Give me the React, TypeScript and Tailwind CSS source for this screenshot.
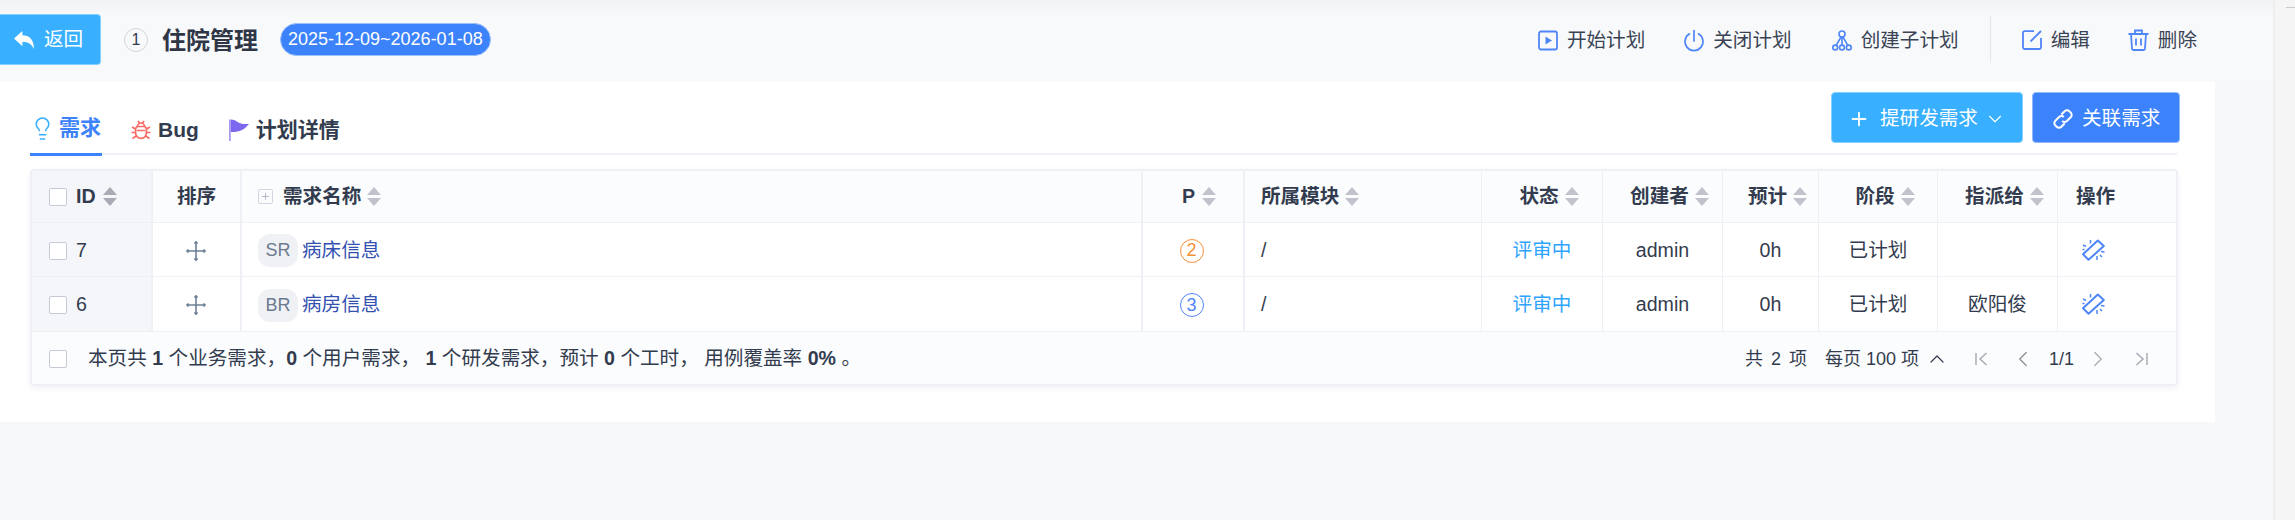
import { Lightbulb, Plus, ChevronDown, ChevronUp, ChevronLeft, ChevronRight } from "lucide-react"

const gridCols =
  "grid grid-cols-[121px_89px_901px_102px_237px_121px_120px_96px_119px_120px_118px]"

const rows = [
  { id: 7, tag: "SR", name: "病床信息", pri: 2, owner: "" },
  { id: 6, tag: "BR", name: "病房信息", pri: 3, owner: "欧阳俊" },
]

function SortIcon({ dark = false }: { dark?: boolean }) {
  return (
    <svg width="14" height="19" viewBox="0 0 14 19" className={`shrink-0 ${dark ? "text-[#a9abb4]" : "text-[#c1c3cc]"}`}>
      <path d="M7 0 14 8H0Z" fill="currentColor" />
      <path d="M0 11H14L7 19Z" fill="currentColor" />
    </svg>
  )
}

function Checkbox() {
  return <span className="block w-[18px] h-[18px] shrink-0 border border-[#c6cad6] rounded-[2px] bg-white" />
}

function PlayIcon() {
  return (
    <svg width="20" height="21" viewBox="0 0 20 21" fill="none" stroke="#4f86f7" strokeWidth="1.8">
      <rect x="1" y="1.5" width="18" height="18" rx="2" />
      <path d="M7.500 6.500 14 10.500 7.500 14.500Z" fill="#4f86f7" stroke="none" />
    </svg>
  )
}

function PowerIcon() {
  return (
    <svg width="20" height="23" viewBox="0 0 20 23" fill="none" stroke="#4f86f7" strokeWidth="1.7" strokeLinecap="round">
      <path d="M10 1.500V12" />
      <path d="M5.500 4.800A9 9 0 1 0 14.500 4.800" />
    </svg>
  )
}

function TreeIcon() {
  return (
    <svg width="20" height="21" viewBox="0 0 20 21" fill="none" stroke="#4f86f7" strokeWidth="1.6">
      <circle cx="10" cy="4" r="3" />
      <circle cx="3.200" cy="17.500" r="2.400" />
      <circle cx="10" cy="17.500" r="2.400" />
      <circle cx="16.800" cy="17.500" r="2.400" />
      <path d="M10 7v8M9 7 4.200 15.400M11 7l4.800 8.400" />
    </svg>
  )
}

function EditIcon() {
  return (
    <svg width="20" height="20" viewBox="0 0 20 20" fill="none" stroke="#4f86f7" strokeWidth="1.8">
      <path d="M12 1.200H2.500A1.500 1.500 0 0 0 1 2.700v14.800A1.500 1.500 0 0 0 2.500 19h15a1.500 1.500 0 0 0 1.500-1.500V8" />
      <path d="M8.500 11.500 19 1" />
    </svg>
  )
}

function TrashIcon() {
  return (
    <svg width="21" height="22" viewBox="0 0 21 22" fill="none" stroke="#4f86f7" strokeWidth="1.8">
      <path d="M0.500 5H20.500M7 5V1.500H14V5" />
      <path d="M3 5 4 19.500A1.500 1.500 0 0 0 5.500 21H15.500A1.500 1.500 0 0 0 17 19.500L18 5" />
      <path d="M8 9.500V16.500M13 9.500V16.500" />
    </svg>
  )
}

function BugIcon() {
  return (
    <svg width="20" height="20" viewBox="0 0 20 20" fill="none" stroke="#fb6a63" strokeWidth="1.7">
      <path d="M6 6.500h8l1.400 2V13a5.400 5.400 0 0 1-10.800 0V8.500Z" />
      <path d="M6.500 6.500a3.500 3.500 0 0 1 7 0M7 1l1.500 2.200M13 1l-1.500 2.200M6 10.500h8M1 7l3.600 2M19 7l-3.600 2M.5 12.500h4M19.500 12.500h-4M1.500 18.500l3.800-2.500M18.500 18.500l-3.800-2.500" />
    </svg>
  )
}

function FlagIcon() {
  return (
    <svg width="20" height="22" viewBox="0 0 20 22">
      <path d="M0 0.500 1.800 0.500V22H0Z" fill="#a99af0" />
      <path d="M1.800 0.500C7 0.500 8 3.500 12 4.500 15 5.200 17 5 20 5 18 7 16 9.500 14 10.500 10.500 12.500 7 13 1.800 13Z" fill="#7b68ee" />
    </svg>
  )
}

function MoveIcon() {
  return (
    <svg width="20" height="20" viewBox="0 0 20 20" fill="none" stroke="#6d7f96" strokeWidth="1.600">
      <path d="M10 1v18M1 10h18" />
      <path d="M8.500 2.500 10 .8l1.500 1.700M8.500 17.500 10 19.200l1.500-1.700M2.500 8.500.8 10l1.700 1.500M17.500 8.500 19.200 10l-1.700 1.500" fill="#6d7f96" />
    </svg>
  )
}

function LinkIcon() {
  return (
    <svg width="20" height="20" viewBox="0 0 18 18" fill="none" stroke="#ffffff" strokeWidth="1.800">
      <path d="M7.500 5 10.500 2a2.900 2.900 0 0 1 4.200 0l1.200 1.200a2.900 2.900 0 0 1 0 4.200l-3.400 3.400a2.900 2.900 0 0 1-4.200 0" />
      <path d="M10.500 13 7.500 16a2.900 2.900 0 0 1-4.200 0l-1.200-1.200a2.900 2.900 0 0 1 0-4.200l3.400-3.400a2.900 2.900 0 0 1 4.200 0" />
    </svg>
  )
}

function UnlinkIcon() {
  return (
    <svg width="23" height="22" viewBox="0 0 23 22" fill="none" stroke="#4f86f7" strokeWidth="2" strokeLinejoin="round">
      <path d="M15.800 1.500 21.800 7 6.500 20.800 1 15.300Z" />
      <path d="M8.500 1V4.500M1 6 4 7.500M.5 10.500H2.500M15 17V21M18 16l2 2M19 12.500 22.500 13" strokeWidth="1.500" />
    </svg>
  )
}

function PageEdge({ flip = false }: { flip?: boolean }) {
  return (
    <svg width="13" height="14" viewBox="0 0 13 14" fill="none" stroke="#a8acb5" strokeWidth="1.500" className={flip ? "-scale-x-100" : ""}>
      <path d="M1 1v12M11.500 1 5 7l6.500 6" />
    </svg>
  )
}

function ToolItem({ icon, label, className = "" }: { icon: React.ReactNode; label: string; className?: string }) {
  return (
    <div className={`flex items-center gap-[9px] pt-[2px] ${className}`}>
      {icon}
      <span>{label}</span>
    </div>
  )
}

function HeadCell({ label }: { label: string }) {
  return (
    <div className="flex items-center justify-center gap-[6px] pl-[14px] border-r border-[#eef0f5]">
      <span>{label}</span>
      <SortIcon />
    </div>
  )
}

export default function App() {
  return (
    <div className="flex w-full h-[520px] overflow-hidden bg-[#f7f8fa] text-[19.6px] text-[#333c4e] font-['Liberation_Sans','Noto_Sans_CJK_SC',sans-serif]">
      <div className="flex-1 min-w-0">
        {/* top bar */}
        <div className="flex items-start h-[82px] bg-gradient-to-b from-[#f1f2f4] to-[#f8f9fb] to-[16px]">
          <button className="flex items-center gap-[10px] w-[101px] h-[51px] mt-[14px] pl-[14px] bg-[#38b0ff] border border-l-0 border-[#86d0ff] rounded-r-[4px] text-white">
            <svg width="20" height="18" viewBox="0 0 19 17" fill="#fff">
              <path d="M0 7 8 0V4C14.500 4 19 8 19 17 16.500 12 13.500 10.300 8 10.300V14.500Z" />
            </svg>
            返回
          </button>
          <span className="flex items-center justify-center w-[24px] h-[24px] ml-[23px] mt-[28px] rounded-full border border-[#d3d6e2] text-[16px] text-[#333c4e]">
            1
          </span>
          <h1 className="ml-[14px] mt-[25px] text-[24px] leading-[32px] font-bold text-[#2f3747]">住院管理</h1>
          <span className="flex items-center h-[33px] ml-[22px] mt-[23px] px-[7px] rounded-full bg-[#3b82fb] border border-[#9dc0fb] text-[18px] text-white">
            2025-12-09~2026-01-08
          </span>
          <div className="flex items-center ml-auto mt-[16px] mr-[76px] h-[47px] text-[#3a4354]">
            <ToolItem icon={<PlayIcon />} label="开始计划" />
            <ToolItem icon={<PowerIcon />} label="关闭计划" className="ml-[39px]" />
            <ToolItem icon={<TreeIcon />} label="创建子计划" className="ml-[40px]" />
            <div className="w-px h-full bg-[#e4e6ea] mx-[31px]" />
            <ToolItem icon={<EditIcon />} label="编辑" />
            <ToolItem icon={<TrashIcon />} label="删除" className="ml-[38px]" />
          </div>
        </div>

        {/* panel */}
        <div className="w-[2215px] h-[340px] bg-white pt-[10px] pl-[30px] pr-[38px]">
          <div className="flex justify-between h-[63px] border-b-2 border-[#eef0f5]">
            <div className="flex items-end h-[64px] font-bold text-[21px] whitespace-nowrap">
              <div className="flex items-center gap-[4px] h-[46px] w-[72px] shrink-0 pb-[7px] border-b-[3px] border-[#3b82fb] text-[#3b82fb]">
                <Lightbulb size={25} color="#38b0ff" strokeWidth={1.500} className="shrink-0" />
                需求
              </div>
              <div className="flex items-center gap-[7px] h-[46px] ml-[29px] pb-[7px]">
                <BugIcon />
                Bug
              </div>
              <div className="flex items-center gap-[7px] h-[46px] ml-[30px] pb-[7px]">
                <FlagIcon />
                计划详情
              </div>
            </div>
            <div className="flex gap-[9px] h-[51px] mr-[-3px] text-white">
              <button className="flex items-center w-[192px] h-full pt-[2px] pl-[16px] bg-[#38b0ff] border border-[#86d0ff] rounded-[4px]">
                <Plus size={22} strokeWidth={2} className="shrink-0" />
                <span className="ml-[10px] whitespace-nowrap">提研发需求</span>
                <ChevronDown size={22} strokeWidth={1.200} className="ml-[6px] shrink-0" />
              </button>
              <button className="flex items-center gap-[9px] w-[148px] h-full pt-[2px] pl-[20px] bg-[#3b82fb] border border-[#92b8fb] rounded-[4px] whitespace-nowrap">
                <LinkIcon />
                关联需求
              </button>
            </div>
          </div>

          {/* table */}
          <div className="mt-[14px] w-[2148px] border-2 border-[#eef0f5] rounded-[4px] shadow-[0_2px_6px_rgba(0,0,0,0.06)] overflow-hidden">
            <div className={`${gridCols} h-[52px] bg-[#fbfcfe] font-bold border-b border-[#eef0f5]`}>
              <div className="flex items-center pl-[17px] bg-[#f5f6f9] border-r-2 border-[#eef0f5]">
                <Checkbox />
                <span className="ml-[9px]">ID</span>
                <span className="ml-[7px]">
                  <SortIcon dark />
                </span>
              </div>
              <div className="flex items-center justify-center border-r-2 border-[#eef0f5]">排序</div>
              <div className="flex items-center pl-[16px] border-r-2 border-[#eef0f5]">
                <span className="flex items-center justify-center w-[15px] h-[15px] border border-[#d3d6e2] rounded-[2px] text-[#9aa0ae] font-normal">
                  <Plus size={11} strokeWidth={1.500} />
                </span>
                <span className="ml-[10px]">需求名称</span>
                <span className="ml-[6px]">
                  <SortIcon />
                </span>
              </div>
              <div className="flex items-center justify-center gap-[7px] pl-[12px] border-r-2 border-[#eef0f5]">
                <span>P</span>
                <SortIcon />
              </div>
              <div className="flex items-center gap-[6px] pl-[16px] border-r border-[#eef0f5]">
                <span>所属模块</span>
                <SortIcon />
              </div>
              <HeadCell label="状态" />
              <HeadCell label="创建者" />
              <HeadCell label="预计" />
              <HeadCell label="阶段" />
              <HeadCell label="指派给" />
              <div className="flex items-center pl-[18px]">操作</div>
            </div>

            {rows.map((row, i) => (
              <div key={row.id} className={`${gridCols} bg-white border-b border-[#eef0f5] ${i === 0 ? "h-[54px]" : "h-[55px]"}`}>
                <div className="flex items-center pt-[2px] pl-[17px] bg-[#f5f6f9] border-r-2 border-[#eef0f5]">
                  <Checkbox />
                  <span className="ml-[9px]">{row.id}</span>
                </div>
                <div className="flex items-center justify-center pt-[2px] pr-[2px] border-r-2 border-[#eef0f5]">
                  <MoveIcon />
                </div>
                <div className="flex items-center pt-[2px] pl-[16px] border-r-2 border-[#eef0f5]">
                  <span className="flex items-center justify-center w-[40px] h-[33px] rounded-[12px] bg-[#f0f1f4] text-[18px] text-[#6b7a90]">
                    {row.tag}
                  </span>
                  <span className="ml-[4px] text-[#3451b2]">{row.name}</span>
                </div>
                <div className="flex items-center justify-center pt-[2px] pr-[3px] border-r-2 border-[#eef0f5]">
                  <span
                    className={`flex items-center justify-center w-[24px] h-[24px] rounded-full border text-[18px] ${
                      row.pri === 2 ? "border-[#f59034] text-[#f59034]" : "border-[#4f83f7] text-[#4f83f7]"
                    }`}
                  >
                    {row.pri}
                  </span>
                </div>
                <div className="flex items-center pt-[2px] pl-[16px] border-r border-[#eef0f5]">/</div>
                <div className="flex items-center justify-center pt-[2px] text-[#2fa4ff] border-r border-[#eef0f5]">评审中</div>
                <div className="flex items-center justify-center pt-[2px] border-r border-[#eef0f5]">admin</div>
                <div className="flex items-center justify-center pt-[2px] border-r border-[#eef0f5]">0h</div>
                <div className="flex items-center justify-center pt-[2px] border-r border-[#eef0f5]">已计划</div>
                <div className="flex items-center justify-center pt-[2px] border-r border-[#eef0f5]">{row.owner}</div>
                <div className="flex items-center pl-[24px]">
                  <UnlinkIcon />
                </div>
              </div>
            ))}

            {/* footer */}
            <div className="flex items-center h-[52px] pt-[2px] pl-[17px] bg-[#fbfcfe]">
              <Checkbox />
              <span className="ml-[21px] whitespace-pre">
                本页共 <b>1</b> 个业务需求，<b>0</b> 个用户需求， <b>1</b> 个研发需求，预计 <b>0</b> 个工时， 用例覆盖率 <b>0%</b> 。
              </span>
              <div className="flex items-center ml-auto pr-[28px] text-[18px] whitespace-nowrap">
                <span className="[word-spacing:3px]">共 2 项</span>
                <span className="ml-[18px]">每页 100 项</span>
                <ChevronUp size={24} strokeWidth={1.200} className="ml-[6px]" />
                <span className="ml-[26px]">
                  <PageEdge />
                </span>
                <ChevronLeft size={26} color="#8b909a" strokeWidth={1.200} className="ml-[22px]" />
                <span className="ml-[13px]">1/1</span>
                <ChevronRight size={26} color="#a8acb5" strokeWidth={1.200} className="ml-[11px]" />
                <span className="ml-[24px]">
                  <PageEdge flip />
                </span>
              </div>
            </div>
          </div>
        </div>
      </div>

      {/* scrollbar strip */}
      <div className="w-[22px] h-full shrink-0 pt-[7px] bg-[#f5f5f6] border-l-2 border-[#eeeef0]">
        <div className="ml-auto w-[9px] h-px bg-[#cccccc]" />
      </div>
    </div>
  )
}
